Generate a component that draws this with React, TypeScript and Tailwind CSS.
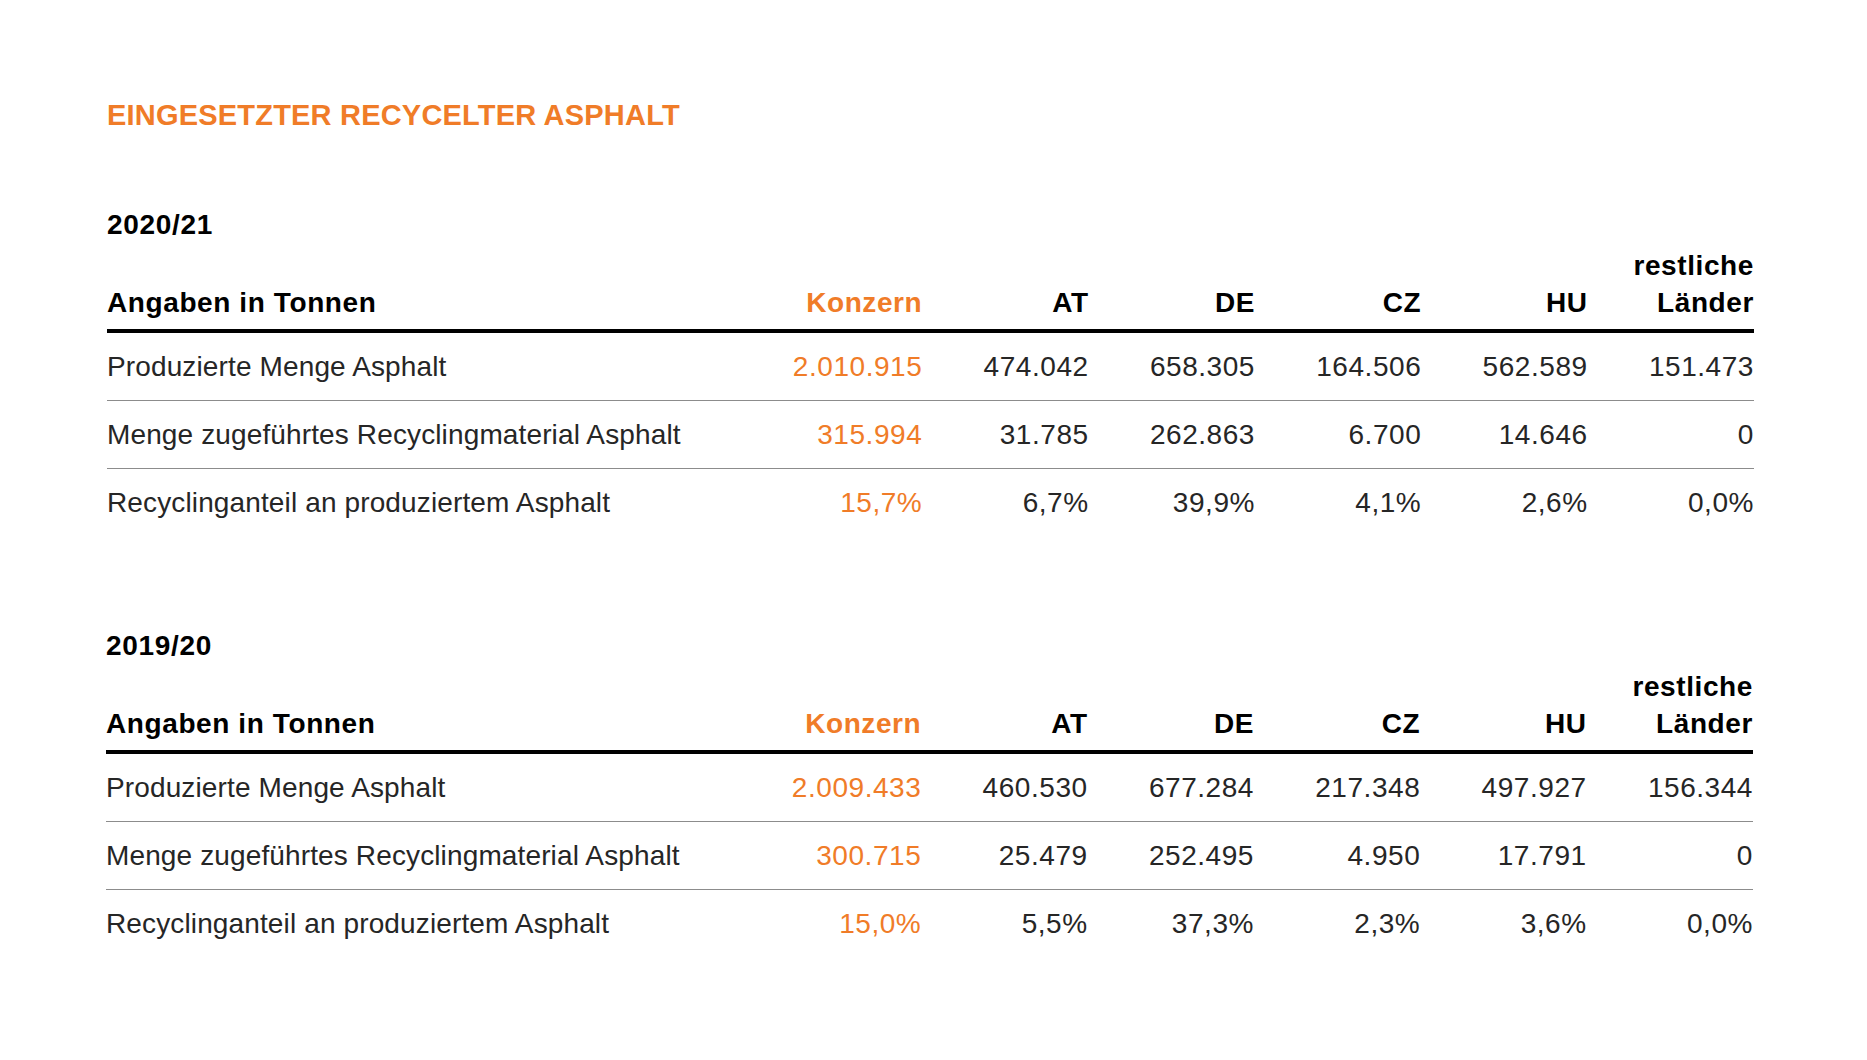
type Row = { label: string; values: string[] };

type Table = { year: string; rows: Row[] };

const COLS = ['Konzern', 'AT', 'DE', 'CZ', 'HU'];

const TABLES: Table[] = [
  {
    year: '2020/21',
    rows: [
      { label: 'Produzierte Menge Asphalt', values: ['2.010.915', '474.042', '658.305', '164.506', '562.589', '151.473'] },
      { label: 'Menge zugeführtes Recyclingmaterial Asphalt', values: ['315.994', '31.785', '262.863', '6.700', '14.646', '0'] },
      { label: 'Recyclinganteil an produziertem Asphalt', values: ['15,7%', '6,7%', '39,9%', '4,1%', '2,6%', '0,0%'] },
    ],
  },
  {
    year: '2019/20',
    rows: [
      { label: 'Produzierte Menge Asphalt', values: ['2.009.433', '460.530', '677.284', '217.348', '497.927', '156.344'] },
      { label: 'Menge zugeführtes Recyclingmaterial Asphalt', values: ['300.715', '25.479', '252.495', '4.950', '17.791', '0'] },
      { label: 'Recyclinganteil an produziertem Asphalt', values: ['15,0%', '5,5%', '37,3%', '2,3%', '3,6%', '0,0%'] },
    ],
  },
];

function YearTable({ t, className }: { t: Table; className: string }) {
  return (
    <section className={'w-[1647px] ' + className}>
      <h2 className="text-[28px] leading-[36px] font-bold tracking-[0.7px] text-black">{t.year}</h2>

      {/* header */}
      <div className="mt-[4px] grid grid-cols-[649px_repeat(6,1fr)] items-end border-b-4 border-black pb-[8px] text-[28px] leading-[37px] font-bold tracking-[0.6px] text-black">
        <div>Angaben in Tonnen</div>
        {COLS.map((c, i) => (
          <div key={c} className={i === 0 ? 'text-right text-[#f07c28]' : 'text-right'}>
            {c}
          </div>
        ))}
        <div className="text-right">
          restliche
          <br />
          Länder
        </div>
      </div>

      {t.rows.map((r, ri) => (
        <div
          key={r.label}
          className={
            ri < t.rows.length - 1
              ? 'grid h-[68px] grid-cols-[649px_repeat(6,1fr)] items-center border-b border-[#8c8c8c] text-[28px] leading-[32px] text-[#262626]'
              : 'grid h-[67px] grid-cols-[649px_repeat(6,1fr)] items-center text-[28px] leading-[32px] text-[#262626]'
          }
        >
          <div className="tracking-[0.13px]">{r.label}</div>
          {r.values.map((v, i) => (
            <div key={i} className={i === 0 ? 'text-right tracking-[0.55px] text-[#f07c28]' : 'text-right tracking-[0.55px]'}>
              {v}
            </div>
          ))}
        </div>
      ))}
    </section>
  );
}

export default function App() {
  return (
    <div className="min-h-screen w-full bg-white pl-[107px] pt-[97px] font-['Liberation_Sans',Arial,sans-serif]">
      <h1 className="text-[29px] leading-[36px] font-bold tracking-[0.2px] text-[#f07c28]">EINGESETZTER RECYCELTER ASPHALT</h1>
      <YearTable t={TABLES[0]} className="mt-[74px]" />
      <YearTable t={TABLES[1]} className="mt-[92px] ml-[-1px]" />
    </div>
  );
}
